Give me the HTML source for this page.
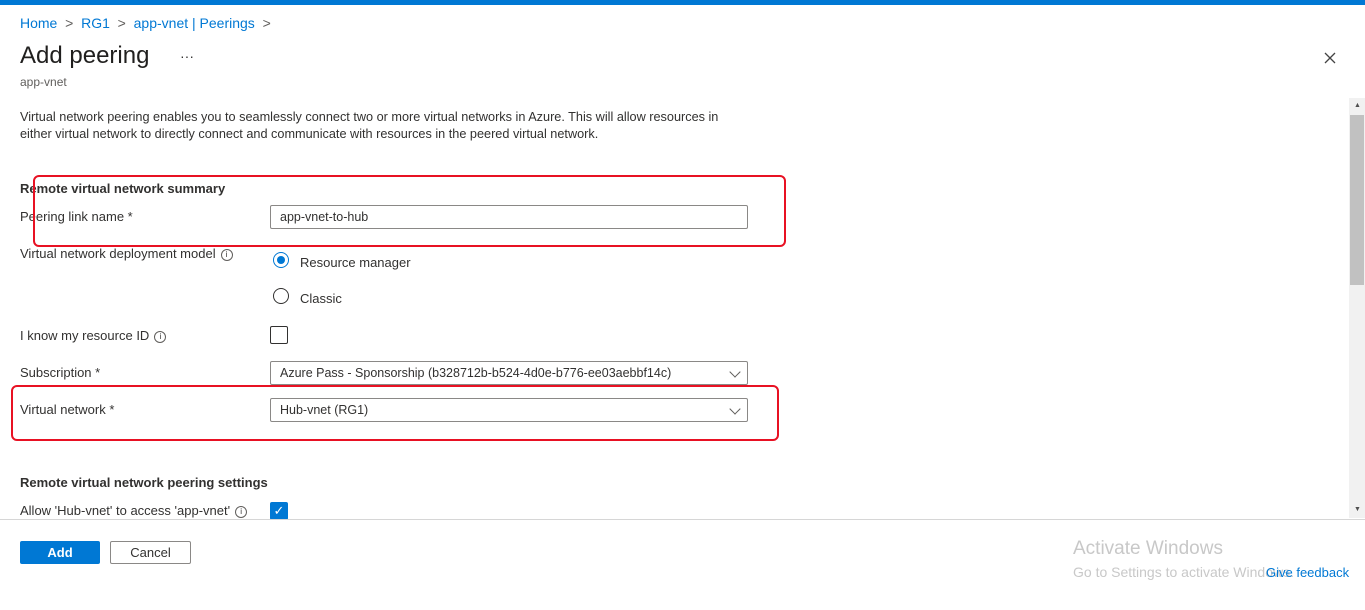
<!DOCTYPE html>
<html><head><style>
body{margin:0;width:1365px;height:610px;overflow:hidden;background:#fff;font-family:"Segoe UI","Liberation Sans",sans-serif;color:#323130;position:relative;font-size:13px}
.a{position:absolute;white-space:nowrap}
.blue{color:#0078d4}
.inp{position:absolute;left:270px;width:467px;height:22px;border:1px solid #8a8886;border-radius:2px;padding-left:9px;line-height:22px;box-sizing:content-box;font-size:12.5px}
.red{position:absolute;border:2px solid #e81123;border-radius:6px}
.info{display:inline-block;width:10px;height:10px;border:1px solid #605e5c;border-radius:50%;font-size:8px;line-height:10px;text-align:center;margin-left:5px;vertical-align:1px}
.chev{position:absolute;right:8px;top:6px;width:7px;height:7px;border-right:1.2px solid #605e5c;border-bottom:1.2px solid #605e5c;transform:rotate(45deg)}
</style></head><body>
<div class="a" style="left:0;top:0;width:1365px;height:5px;background:#0078d4"></div>
<div class="a blue" style="left:20px;top:15px;font-size:14px">Home <span style="color:#605e5c">&nbsp;&gt;&nbsp;</span> RG1 <span style="color:#605e5c">&nbsp;&gt;&nbsp;</span> app-vnet | Peerings <span style="color:#605e5c">&nbsp;&gt;</span></div>
<div class="a" style="left:20px;top:42px;font-size:24px;color:#201f1e">Add peering</div>
<div class="a" style="left:180px;top:48px;font-size:14px">···</div>
<div class="a" style="left:20px;top:75px;font-size:12px;color:#605e5c">app-vnet</div>
<svg class="a" style="left:1324px;top:52px" width="12" height="12"><path d="M1 1L11 11M11 1L1 11" stroke="#444" stroke-width="1.3"/></svg>
<div class="a" style="left:20px;top:109px;line-height:17px;font-size:12.7px">Virtual network peering enables you to seamlessly connect two or more virtual networks in Azure. This will allow resources in<br>either virtual network to directly connect and communicate with resources in the peered virtual network.</div>
<div class="a" style="left:20px;top:181px;font-weight:bold;font-size:13px">Remote virtual network summary</div>
<div class="a" style="left:20px;top:209px">Peering link name <span>*</span></div>
<div class="inp" style="top:205px">app-vnet-to-hub</div>
<div class="red" style="left:33px;top:175px;width:749px;height:68px"></div>
<div class="a" style="left:20px;top:246px">Virtual network deployment model<span class="info">i</span></div>
<div class="a" style="left:273px;top:252px;width:14px;height:14px;border:1px solid #0078d4;border-radius:50%"></div>
<div class="a" style="left:277px;top:256px;width:8px;height:8px;background:#0078d4;border-radius:50%"></div>
<div class="a" style="left:300px;top:255px">Resource manager</div>
<div class="a" style="left:273px;top:288px;width:16px;height:16px;border:1px solid #323130;border-radius:50%;box-sizing:border-box"></div>
<div class="a" style="left:300px;top:291px">Classic</div>
<div class="a" style="left:20px;top:328px">I know my resource ID<span class="info">i</span></div>
<div class="a" style="left:270px;top:326px;width:18px;height:18px;border:1px solid #323130;border-radius:2px;box-sizing:border-box"></div>
<div class="a" style="left:20px;top:365px">Subscription *</div>
<div class="inp" style="top:361px">Azure Pass - Sponsorship (b328712b-b524-4d0e-b776-ee03aebbf14c)<div class="chev"></div></div>
<div class="a" style="left:20px;top:402px">Virtual network *</div>
<div class="inp" style="top:398px">Hub-vnet (RG1)<div class="chev"></div></div>
<div class="red" style="left:11px;top:385px;width:764px;height:52px"></div>
<div class="a" style="left:20px;top:475px;font-weight:bold">Remote virtual network peering settings</div>
<div class="a" style="left:20px;top:503px">Allow 'Hub-vnet' to access 'app-vnet'<span class="info">i</span></div>
<div class="a" style="left:270px;top:502px;width:18px;height:18px;background:#0078d4;border-radius:2px;color:#fff;font-size:13px;line-height:18px;text-align:center">✓</div>
<div class="a" style="left:1349px;top:98px;width:16px;height:420px;background:#f1f1f1"></div>
<div class="a" style="left:1350px;top:115px;width:14px;height:170px;background:#c1c1c1"></div>
<div class="a" style="left:1354px;top:102px;font-size:7px;color:#505050">▲</div>
<div class="a" style="left:1354px;top:506px;font-size:7px;color:#505050">▼</div>
<div class="a" style="left:0;top:519px;width:1365px;height:1px;background:#d6d6d6"></div>
<div class="a" style="left:20px;top:541px;width:80px;height:23px;background:#0078d4;color:#fff;font-weight:bold;text-align:center;line-height:23px;border-radius:2px">Add</div>
<div class="a" style="left:110px;top:541px;width:79px;height:21px;border:1px solid #8a8886;text-align:center;line-height:21px;border-radius:2px">Cancel</div>
<div class="a" style="left:1073px;top:538px;font-size:19px;color:#c8c8c8">Activate Windows</div>
<div class="a" style="left:1073px;top:564px;font-size:14px;color:#c8c8c8">Go to Settings to activate Windows.</div>
<div class="a blue" style="left:1266px;top:565px;font-size:13px">Give feedback</div>
</body></html>
